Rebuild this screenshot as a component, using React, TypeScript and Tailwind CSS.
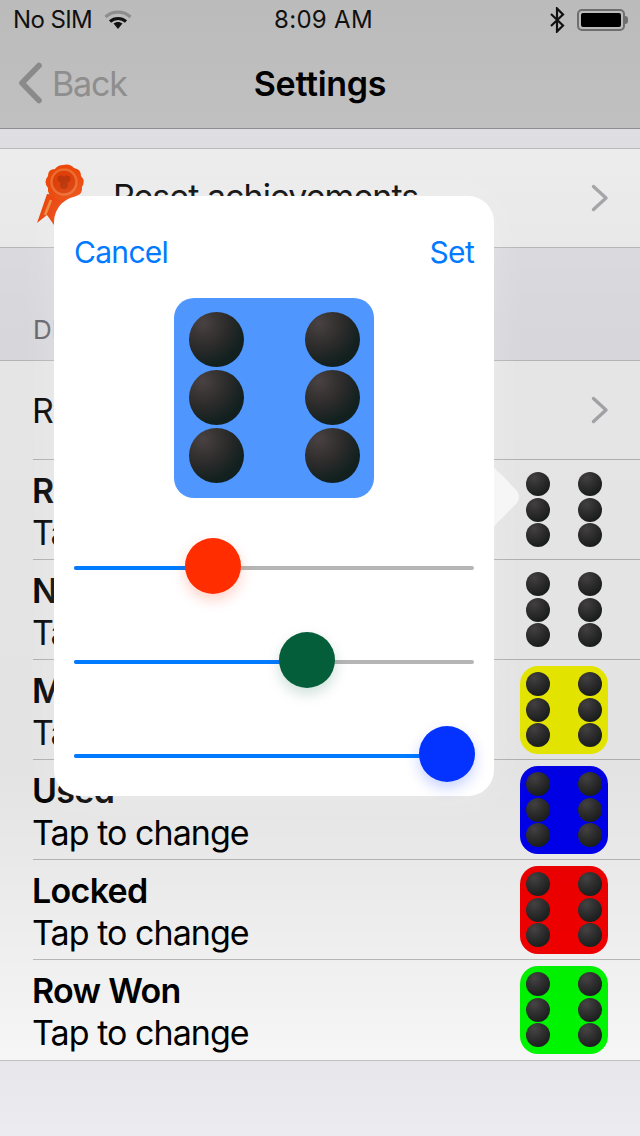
import React from "react";

const FONT = "font-['Inter','Liberation_Sans',sans-serif]";

const Pips = ({ big }: { big?: boolean }) => {
  const pip = big
    ? "w-[55px] h-[55px] rounded-full bg-[radial-gradient(circle_at_25%_20%,#4a4242_0%,#2d2b2b_40%,#12211f_70%,#101c1c_100%)]"
    : "w-6 h-6 rounded-full bg-[radial-gradient(circle_at_35%_25%,#4a4747_0%,#2c2c2c_50%,#141a1a_90%)]";
  return (
    <>
      {[0, 1, 2, 3, 4, 5].map((i) => (
        <div key={i} className={pip} />
      ))}
    </>
  );
};

// small die on the right of each row, transparent for the first two
const Die = ({ color }: { color: string }) => (
  <div
    className={`w-[88px] h-[88px] rounded-[18px] p-[6px] grid grid-cols-[24px_24px] justify-between content-start gap-y-[1.5px] ${color}`}
  >
    <Pips />
  </div>
);

const Chevron = () => (
  <svg width="18" height="28" viewBox="0 0 18 28" className="shrink-0">
    <path d="M2.5 2.5 L15 14 L2.5 25.5" fill="none" stroke="#b4b4b8" strokeWidth="3.4" strokeLinecap="round" strokeLinejoin="round" />
  </svg>
);

const ColorRow = ({ title, color, last }: { title: string; color: string; last?: boolean }) => (
  <div className={`h-[100px] ml-[33px] flex items-start justify-between pr-[32px] ${last ? "" : "border-b border-[#c2c2c2]"}`}>
    <div className="pt-[10px] ml-[-1px]">
      <div className="text-[34px] leading-[42px] font-semibold text-black tracking-[-0.7px]">{title}</div>
      <div className="text-[34px] leading-[42px] text-black tracking-[-0.95px]">Tap to change</div>
    </div>
    <div className="pt-[6px]">
      <Die color={color} />
    </div>
  </div>
);

const Slider = ({ fill, thumb }: { fill: string; thumb: string }) => (
  <div className="relative flex h-1 rounded-full overflow-visible bg-[#b5b5b5]">
    <div className={`h-1 rounded-full bg-[#007aff] ${fill}`} />
    <div className={`absolute top-[-28px] w-14 h-14 rounded-full ${thumb}`} />
  </div>
);

const WifiIcon = () => (
  <svg width="28" height="20" viewBox="0 0 28 20">
    <path d="M1.5 7 C8.5 0.5 19.5 0.5 26.5 7" fill="none" stroke="#8e8e8e" strokeWidth="3.2" />
    <path d="M6 11.5 C10.5 7.5 17.5 7.5 22 11.5" fill="none" stroke="#111" strokeWidth="3.2" />
    <path d="M9.5 13.6 C12 11.4 16 11.4 18.5 13.6 L14 19 Z" fill="#111" />
  </svg>
);

const BluetoothIcon = () => (
  <svg width="17" height="26" viewBox="0 0 17 26">
    <path d="M2 7 L14 18.5 L8 24.5 L8 1.5 L14 7.5 L2 19" fill="none" stroke="#111" strokeWidth="2.2" />
  </svg>
);

const BatteryIcon = () => (
  <div className="flex items-center">
    <div className="w-[48px] h-[22px] rounded-[5px] border-2 border-[#6f6f6f] p-[2px]">
      <div className="w-full h-full rounded-[2px] bg-black" />
    </div>
    <div className="w-[3px] h-2 rounded-r-sm bg-[#6f6f6f]" />
  </div>
);

const Ribbon = () => (
  <svg width="56" height="80" viewBox="0 0 56 80" className="shrink-0">
    <path d="M15 36 L5 65 L15 57 L22 67 L38 38 Z" fill="#ff4606" />
    <path d="M19 42 L13 57" fill="none" stroke="#ff9440" strokeWidth="2.6" />
    <path d="M31 7 Q38 5 42 10 Q49 11 49 18 Q54 23 50 29 Q51 36 44 38 Q40 44 33 41 Q26 44 22 39 Q15 37 16 30 Q11 24 16 18 Q16 11 23 11 Q26 7 31 7 Z" fill="#ff4c08" />
    <circle cx="32" cy="24" r="12.5" fill="#f04206" stroke="#ff7430" strokeWidth="2.4" />
    <circle cx="29" cy="21" r="3.4" fill="#cc3608" />
    <circle cx="35" cy="21" r="3.4" fill="#cc3608" />
    <circle cx="32" cy="27" r="4" fill="#cc3608" />
  </svg>
);

export default function App() {
  return (
    <div className={`relative w-[640px] h-[1136px] overflow-hidden bg-[#efeff4] ${FONT}`}>
      {/* Status bar + nav */}
      <header className="h-[129px] border-b border-[#8f8f8f] bg-[linear-gradient(180deg,#bbbbbb,#c0c0c0)]">
        <div className="h-10 flex items-center justify-between pl-[13px] pr-[12px] text-[24px] text-[#111]">
          <div className="flex-1 flex items-center gap-[12px]">
            <span className="tracking-[-0.6px]">No SIM</span>
            <WifiIcon />
          </div>
          <span className="ml-[6px] tracking-[0.3px]">8:09 AM</span>
          <div className="flex-1 flex items-center justify-end gap-[11px]">
            <BluetoothIcon />
            <BatteryIcon />
          </div>
        </div>
        <div className="h-[88px] pb-[2px] grid grid-cols-[1fr_auto_1fr] items-center px-[18px]">
          <div className="flex items-center gap-[9px] text-[#8e8e8e] text-[34px]">
            <svg width="25" height="42" viewBox="0 0 25 42">
              <path d="M21 3.5 L4 21 L21 38.5" fill="none" stroke="#8a8a8a" strokeWidth="5.6" strokeLinecap="round" strokeLinejoin="round" />
            </svg>
            <span className="tracking-[-1.15px]">Back</span>
          </div>
          <div className="text-[34px] font-semibold text-black tracking-[-0.3px]">Settings</div>
          <div />
        </div>
      </header>

      <main className="relative h-[1007px]">
        <div className="h-[19px]" />
        <section className="h-[100px] bg-white border-y border-[#c8c8c8] flex items-center pl-[32px] pr-[31px]">
          <Ribbon />
          <span className="ml-[25px] mt-[-3px] flex-1 text-[34px] text-black tracking-[-0.95px]">Reset achievements</span>
          <Chevron />
        </section>

        <div className="h-[112px] flex items-end pl-[33px] pb-[15px] text-[26px] leading-[30px] text-[#6d6d72]">DI</div>

        <section className="bg-white border-y border-[#c8c8c8]">
          <div className="h-[99px] ml-[33px] pr-[31px] flex items-center justify-between border-b border-[#c2c2c2]">
            <span className="text-[34px] text-black ml-[-1px]">R</span>
            <Chevron />
          </div>
          <ColorRow title="R" color="bg-transparent" />
          <ColorRow title="N" color="bg-transparent" />
          <ColorRow title="M" color="bg-[#ffff00]" />
          <ColorRow title="Used" color="bg-[#0000ff]" />
          <ColorRow title="Locked" color="bg-[#ff0000]" />
          <ColorRow title="Row Won" color="bg-[#00ff00]" last />
        </section>

        {/* dimming behind the popover */}
        <div className="absolute inset-0 bg-[linear-gradient(180deg,rgba(0,0,0,0.07)_0px,rgba(0,0,0,0.1)_200px,rgba(0,0,0,0.11)_640px,rgba(0,0,0,0.04)_920px,rgba(0,0,0,0.015)_1007px)]" />
      </main>

      {/* Popover */}
      <div className="absolute left-[54px] top-[196px] w-[440px] h-[600px] rounded-[26px] bg-white px-5 shadow-[0_0_40px_rgba(255,255,255,0.25)]">
        <svg width="28" height="60" viewBox="0 0 28 60" className="absolute left-[438px] top-[271px]">
          <path d="M2 0 Q4 4 9 7 L25 24 Q29 30 25 36 L9 52 Q4 56 2 60 Z" fill="#f6f6f6" />
        </svg>
        <div className="flex justify-between pt-[38px] text-[30px] leading-9 text-[#007aff] tracking-[-0.7px]">
          <span>Cancel</span>
          <span>Set</span>
        </div>
        <div className="mt-[28px] mx-auto w-[200px] h-[200px] rounded-[20px] bg-[#4f96ff] pl-[15px] pr-[14px] pt-[14px] grid grid-cols-[55px_55px] justify-between content-start gap-y-[3px]">
          <Pips big />
        </div>
        <div className="mt-[68px] flex flex-col gap-[90px]">
          <Slider fill="w-[125px]" thumb="left-[111px] bg-[#ff2d00] shadow-[0_6px_14px_rgba(255,45,0,0.22)]" />
          <Slider fill="w-[220px]" thumb="left-[205px] bg-[#055e3a] shadow-[0_6px_14px_rgba(5,94,58,0.2)]" />
          <Slider fill="w-[380px]" thumb="left-[345px] bg-[#0433ff] shadow-[0_6px_14px_rgba(4,51,255,0.22)]" />
        </div>
      </div>
    </div>
  );
}
